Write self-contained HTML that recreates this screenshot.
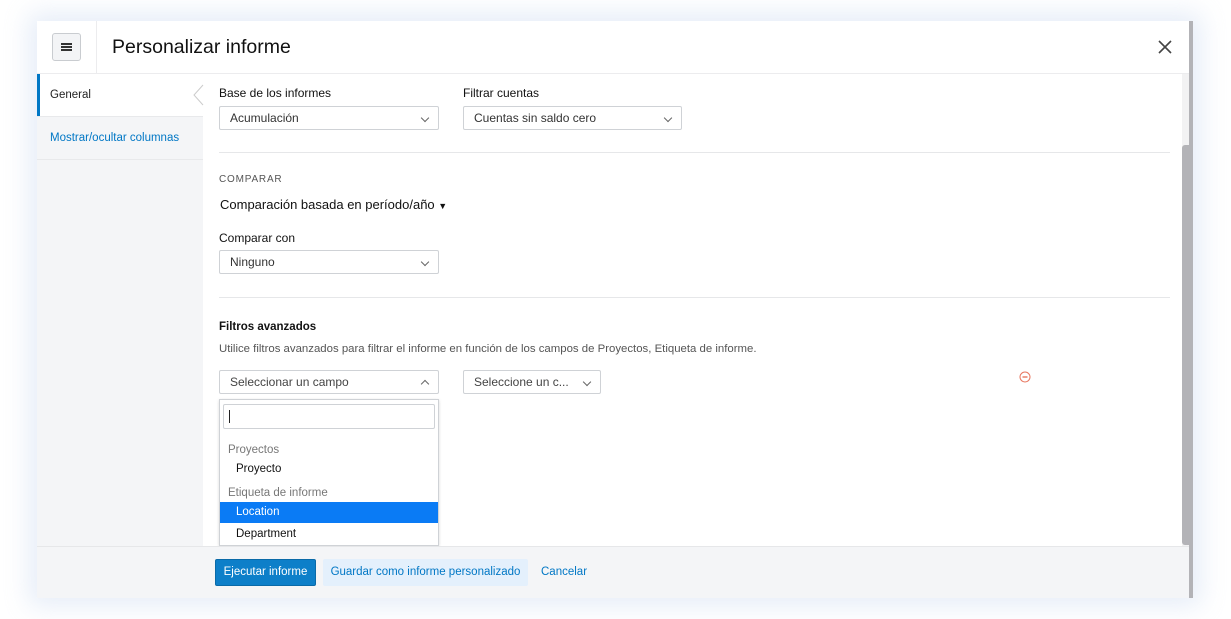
<!DOCTYPE html>
<html><head><meta charset="utf-8"><style>
*{box-sizing:border-box;margin:0;padding:0}
body{width:1231px;height:619px;background:#fff;font-family:"Liberation Sans",Arial,sans-serif;position:relative;overflow:hidden;color:#1f1f1f}
.a{position:absolute}
.modal{left:37px;top:21px;width:1156px;height:577px;background:#fff;box-shadow:0 0 24px 8px rgba(200,215,240,.45)}
.sel{position:absolute;height:24px;border:1px solid #cfd2d6;border-radius:2px;background:#fff;font-size:12px;color:#333;padding:0 10px;line-height:23px}
.chev{position:absolute;right:10px;top:8px;width:6px;height:6px;border-right:1.2px solid #666;border-bottom:1.2px solid #666;transform:rotate(45deg)}
.chevu{position:absolute;right:10px;top:10px;width:6px;height:6px;border-left:1.2px solid #666;border-top:1.2px solid #666;transform:rotate(45deg)}
.lbl{font-size:12px;color:#111}
.hr{height:1px;background:#e6e7e9}
</style></head><body>
<div class="a modal"></div>
<div class="a" style="left:37px;top:73px;width:1152px;height:1px;background:#ececee"></div>
<div class="a" style="left:96px;top:21px;width:1px;height:52px;background:#ececee"></div>
<div class="a" style="left:52px;top:33px;width:29px;height:28px;border:1px solid #c9ccd0;border-radius:3px;background:#f3f4f6"></div>
<div class="a" style="left:61px;top:43px;width:11px;height:2px;background:#333;box-shadow:0 3px 0 #333,0 6px 0 #333"></div>
<div class="a" style="left:112px;top:36px;font-size:19.5px;color:#111">Personalizar informe</div>
<svg class="a" style="left:1157px;top:39px" width="16" height="16"><path d="M2 2L14 14M14 2L2 14" stroke="#444" stroke-width="1.6"/></svg>
<div class="a" style="left:37px;top:74px;width:166px;height:472px;background:#f4f5f7"></div>
<div class="a" style="left:37px;top:74px;width:166px;height:42px;background:#fff;border-left:3px solid #0077c5"></div>
<div class="a" style="left:50px;top:89px;font-size:11.5px;color:#222">General</div>
<div class="a" style="left:37px;top:116px;width:166px;height:1px;background:#e8e9eb"></div>
<div class="a" style="left:50px;top:132px;font-size:11.5px;color:#0077c5">Mostrar/ocultar columnas</div>
<div class="a" style="left:37px;top:159px;width:166px;height:1px;background:#e8e9eb"></div>
<svg class="a" style="left:192px;top:84px" width="12" height="22"><path d="M11 1L2 11L11 21" stroke="#ccc" fill="#fff" stroke-width="1"/></svg>
<div class="a lbl" style="left:219px;top:86px">Base de los informes</div>
<div class="sel" style="left:219px;top:106px;width:220px">Acumulación<span class="chev"></span></div>
<div class="a lbl" style="left:463px;top:86px">Filtrar cuentas</div>
<div class="sel" style="left:463px;top:106px;width:219px">Cuentas sin saldo cero<span class="chev"></span></div>
<div class="a hr" style="left:219px;top:152px;width:951px"></div>
<div class="a" style="left:219px;top:174px;font-size:10px;letter-spacing:.8px;color:#555">COMPARAR</div>
<div class="a" style="left:220px;top:197px;font-size:13px;color:#111">Comparación basada en período/año <span style="font-size:9px">▼</span></div>
<div class="a lbl" style="left:219px;top:231px">Comparar con</div>
<div class="sel" style="left:219px;top:250px;width:220px">Ninguno<span class="chev"></span></div>
<div class="a hr" style="left:219px;top:297px;width:951px"></div>
<div class="a" style="left:219px;top:321px;font-size:11.5px;font-weight:bold;color:#111">Filtros avanzados</div>
<div class="a" style="left:219px;top:343px;font-size:11.4px;color:#555">Utilice filtros avanzados para filtrar el informe en función de los campos de Proyectos, Etiqueta de informe.</div>
<div class="sel" style="left:219px;top:370px;width:220px;color:#444">Seleccionar un campo<span class="chevu"></span></div>
<div class="sel" style="left:463px;top:370px;width:138px;color:#444">Seleccione un c...<span class="chev"></span></div>
<svg class="a" style="left:1019px;top:371px" width="12" height="12"><circle cx="6" cy="6" r="5" fill="none" stroke="#e8765f" stroke-width="1"/><path d="M3.5 6H8.5" stroke="#e8765f" stroke-width="1.4"/></svg>
<div class="a" style="left:219px;top:399px;width:220px;height:147px;border:1px solid #cfd2d6;background:#fff;box-shadow:0 1px 3px rgba(0,0,0,.15)"></div>
<div class="a" style="left:223px;top:404px;width:212px;height:25px;border:1px solid #cfd2d6;border-radius:2px"></div>
<div class="a" style="left:229px;top:410px;width:1px;height:13px;background:#222"></div>
<div class="a" style="left:228px;top:444px;font-size:11.5px;color:#777">Proyectos</div>
<div class="a" style="left:236px;top:463px;font-size:11.5px;color:#111">Proyecto</div>
<div class="a" style="left:228px;top:487px;font-size:11.5px;color:#777">Etiqueta de informe</div>
<div class="a" style="left:220px;top:502px;width:218px;height:21px;background:#0a7bf5"></div>
<div class="a" style="left:236px;top:506px;font-size:11.5px;color:#fff">Location</div>
<div class="a" style="left:236px;top:528px;font-size:11.5px;color:#111">Department</div>
<div class="a" style="left:37px;top:546px;width:1152px;height:52px;background:#f4f5f7;border-top:1px solid #e6e7e9"></div>
<div class="a" style="left:215px;top:559px;width:101px;height:27px;background:#0d7fc9;border:1px solid #0a6aa8;border-radius:2px;color:#fff;font-size:11.5px;text-align:center;line-height:25px">Ejecutar informe</div>
<div class="a" style="left:323px;top:559px;width:205px;height:27px;background:#e4f0fc;border-radius:2px;color:#0077c5;font-size:11.5px;text-align:center;line-height:27px">Guardar como informe personalizado</div>
<div class="a" style="left:541px;top:566px;font-size:11.5px;color:#0077c5">Cancelar</div>
<div class="a" style="left:1182px;top:74px;width:7px;height:472px;background:#f2f2f3"></div>
<div class="a" style="left:1189px;top:21px;width:4px;height:577px;background:#b3b3b7"></div>
<div class="a" style="left:1182px;top:145px;width:11px;height:400px;background:#b3b3b7;border-radius:3px 0 0 3px"></div>
</body></html>
